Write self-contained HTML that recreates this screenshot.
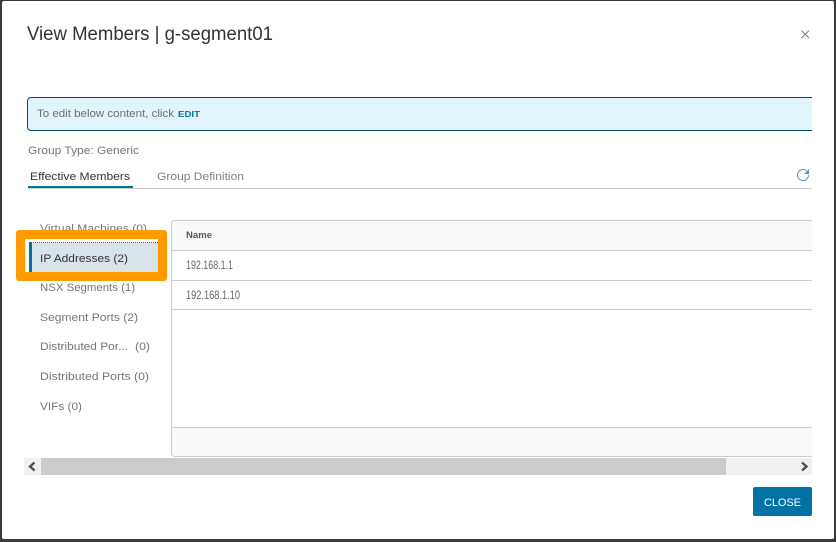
<!DOCTYPE html>
<html><head><meta charset="utf-8"><style>
html,body{margin:0;padding:0;background:#3a3a3a;width:836px;height:542px;overflow:hidden}
svg{display:block}
text{font-family:"Liberation Sans",sans-serif;font-size:11px;fill:#767676}
</style></head><body>
<svg width="836" height="542" viewBox="0 0 836 542" xmlns="http://www.w3.org/2000/svg">
<rect width="836" height="542" fill="#3a3a3a"/>
<rect x="2" y="1" width="832" height="538" rx="2" fill="#fff"/>
<text x="27" y="40" textLength="246" lengthAdjust="spacingAndGlyphs" style="font-size:19px;fill:#333">View Members | g-segment01</text>
<path d="M801.5 30.500l7.500 7.500M809 30.500l-7.500 7.500" stroke="#777" stroke-width="0.900" fill="none"/>
<path d="M812 97.500H31a3.500 3.500 0 0 0-3.500 3.500v26a3.500 3.500 0 0 0 3.500 3.500H812z" fill="#e1f3fb"/>
<path d="M812 97.500H31a3.500 3.500 0 0 0-3.500 3.500v26a3.500 3.500 0 0 0 3.500 3.500H812" fill="none" stroke="#004a70" stroke-width="1"/>
<text x="37" y="117" textLength="137" lengthAdjust="spacingAndGlyphs" style="font-size:11px;fill:#707070">To edit below content, click</text>
<text x="178" y="117" textLength="22" lengthAdjust="spacingAndGlyphs" style="font-size:8px;font-weight:bold;fill:#0072a3">EDIT</text>
<text x="28" y="154" textLength="111" lengthAdjust="spacingAndGlyphs">Group Type: Generic</text>
<text x="30" y="180" textLength="100" lengthAdjust="spacingAndGlyphs" style="fill:#333">Effective Members</text>
<text x="157" y="180" textLength="87" lengthAdjust="spacingAndGlyphs" style="fill:#808080">Group Definition</text>
<rect x="27" y="188" width="785" height="1" fill="#ccc"/>
<rect x="28" y="186" width="105" height="2" fill="#0072a3"/>
<path d="M806.500 170.800a5.500 5.500 0 1 0 2 4.200" fill="none" stroke="#4a9cc4" stroke-width="1"/>
<path d="M809 169v5h-5z" fill="#4a9cc4"/>

<text x="40" y="232" textLength="107" lengthAdjust="spacingAndGlyphs">Virtual Machines (0)</text>
<text x="40" y="291" textLength="95" lengthAdjust="spacingAndGlyphs">NSX Segments (1)</text>
<text x="40" y="321" textLength="98" lengthAdjust="spacingAndGlyphs">Segment Ports (2)</text>
<text x="40" y="350" textLength="88" lengthAdjust="spacingAndGlyphs">Distributed Por...</text>
<text x="135" y="350" textLength="15" lengthAdjust="spacingAndGlyphs">(0)</text>
<text x="40" y="380" textLength="109" lengthAdjust="spacingAndGlyphs">Distributed Ports (0)</text>
<text x="40" y="410" textLength="42" lengthAdjust="spacingAndGlyphs">VIFs (0)</text>

<rect x="25" y="239" width="133" height="33" fill="#fff"/>
<rect x="32" y="243" width="126" height="29" fill="#d9e4ea"/>
<rect x="29" y="242" width="3" height="30" fill="#0072a3"/>
<line x1="29" y1="242.500" x2="158" y2="242.500" stroke="#555" stroke-width="1" stroke-dasharray="1 1"/>
<path fill-rule="evenodd" d="M19 230h145a3 3 0 0 1 3 3v45a3 3 0 0 1-3 3H19a3 3 0 0 1-3-3v-45a3 3 0 0 1 3-3zM25 239v33h133v-33z" fill="#ff9a00"/>
<text x="40" y="262" textLength="88" lengthAdjust="spacingAndGlyphs" style="fill:#333">IP Addresses (2)</text>

<path d="M812 220.500H174.500a3 3 0 0 0-3 3V453.500a3 3 0 0 0 3 3H812z" fill="#fff"/>
<rect x="172" y="221" width="640" height="29" fill="#fafafa"/>
<rect x="172" y="428" width="640" height="28" fill="#fafafa"/>
<path d="M812 220.500H174.500a3 3 0 0 0-3 3V453.500a3 3 0 0 0 3 3H812" fill="none" stroke="#ccc" stroke-width="1"/>
<rect x="172" y="250" width="640" height="1" fill="#ccc"/>
<rect x="172" y="280" width="640" height="1" fill="#ccc"/>
<rect x="172" y="309" width="640" height="1" fill="#ccc"/>
<rect x="172" y="427" width="640" height="1" fill="#ccc"/>
<text x="186" y="238" textLength="26" lengthAdjust="spacingAndGlyphs" style="font-size:9px;font-weight:bold;fill:#565656">Name</text>
<text x="186" y="269" textLength="47" lengthAdjust="spacingAndGlyphs" style="font-size:11.500px;fill:#666">192.168.1.1</text>
<text x="186" y="299" textLength="54" lengthAdjust="spacingAndGlyphs" style="font-size:11.500px;fill:#666">192.168.1.10</text>

<rect x="24" y="458" width="788" height="17" fill="#f0f0f0"/>
<rect x="41" y="458" width="685" height="17" fill="#cbcbcb"/>
<path d="M34.500 462.500l-4.500 4 4.500 4" fill="none" stroke="#505050" stroke-width="2.400"/>
<path d="M802 462.500l4.500 4-4.500 4" fill="none" stroke="#505050" stroke-width="2.400"/>

<rect x="753" y="487" width="59" height="29" rx="2" fill="#0072a3"/>
<text x="764" y="506" textLength="37" lengthAdjust="spacing" style="font-size:11px;fill:#fff">CLOSE</text>
</svg>
</body></html>
